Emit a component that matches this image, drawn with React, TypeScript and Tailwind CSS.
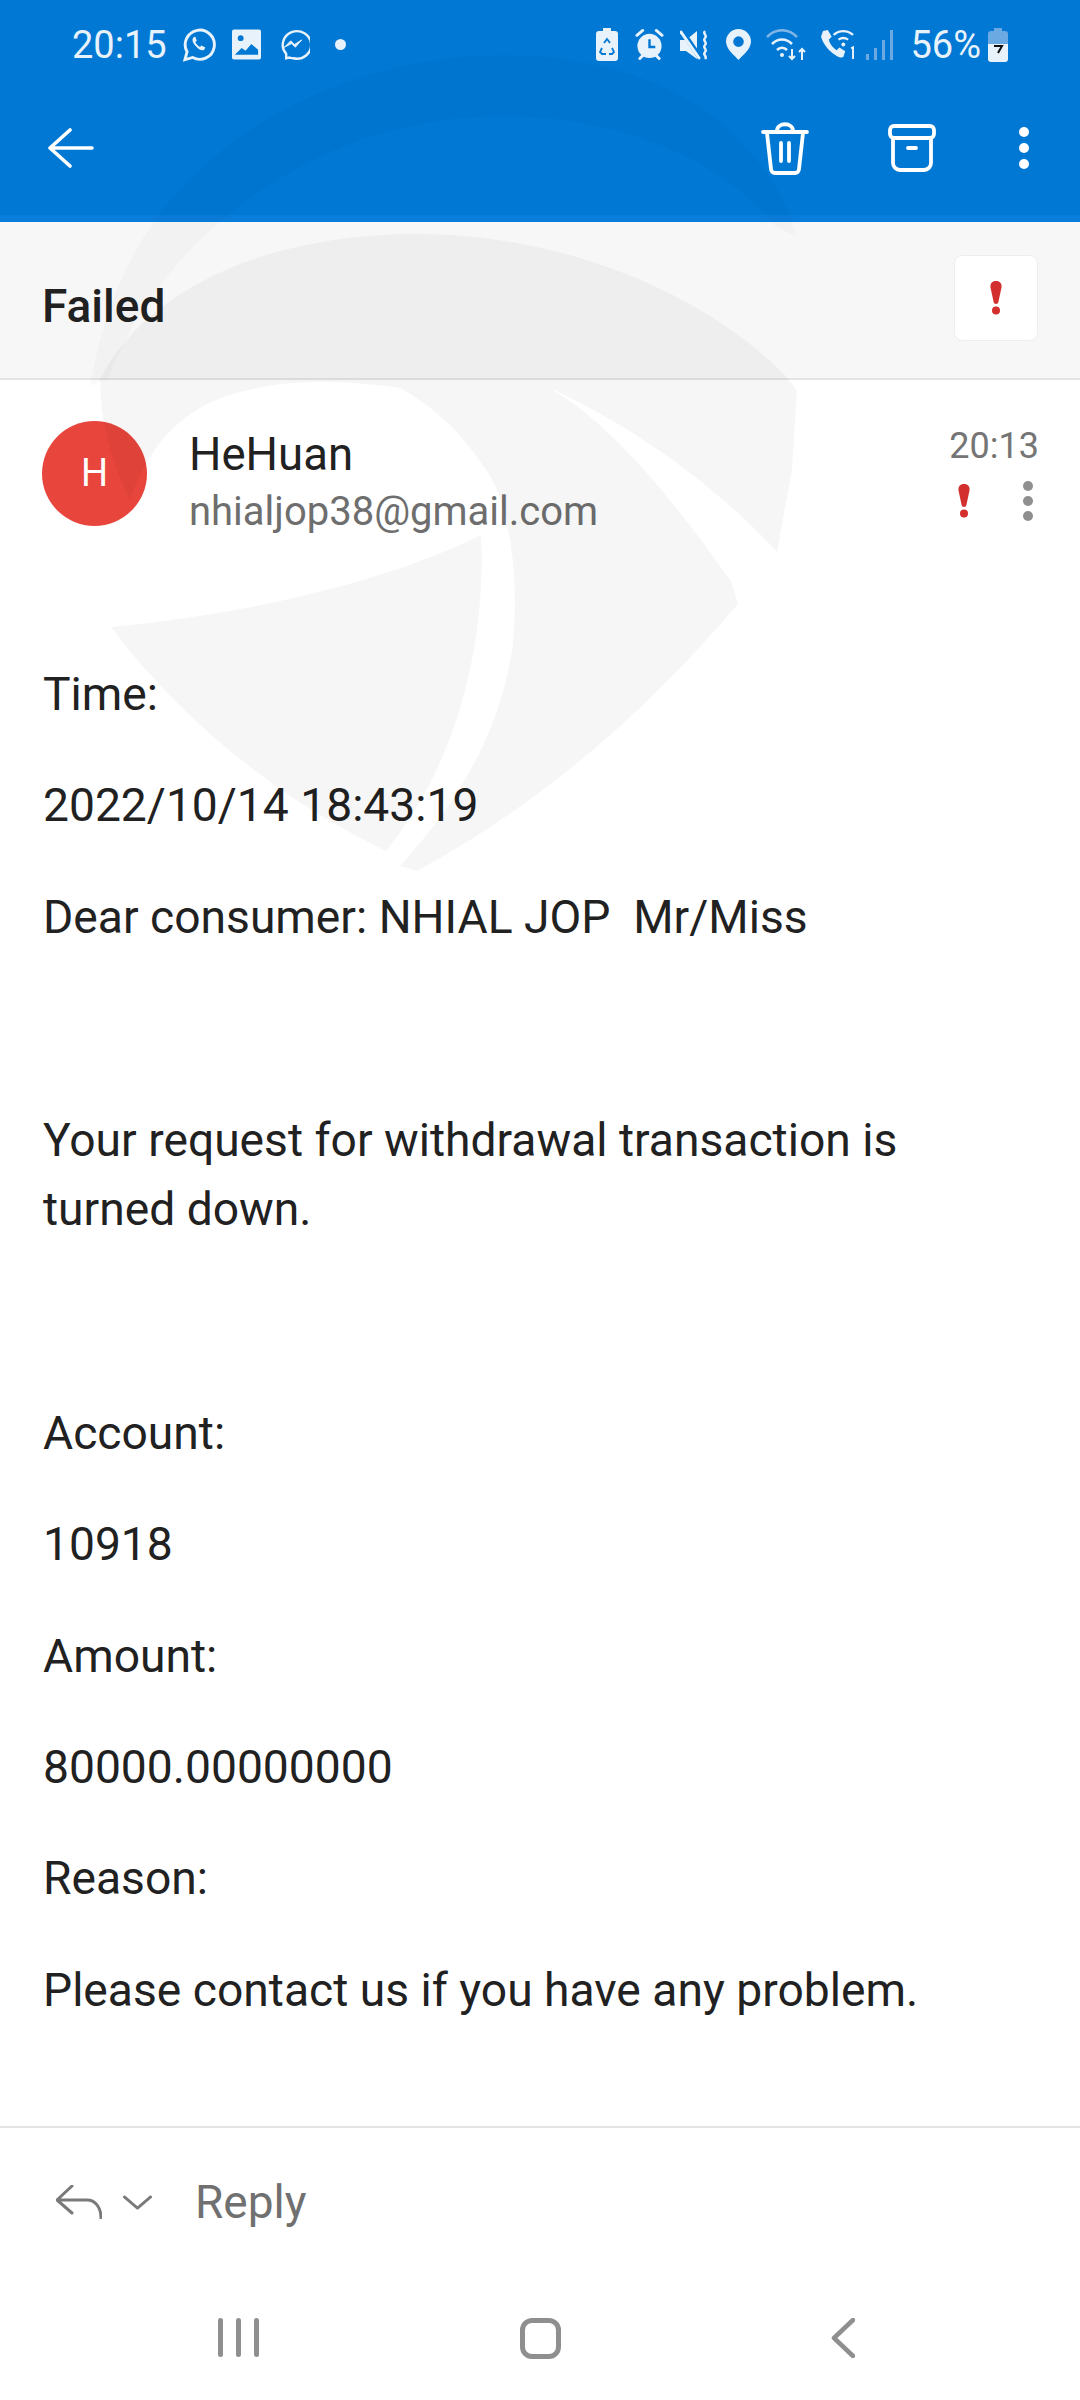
import React from 'react';

const font = { fontFamily: 'Roboto, sans-serif' };

const Bang = ({ className }: { className: string }) => (
  <svg viewBox="0 0 14 34" className={className} fill="#d32f2f">
    <path d="M7 0c4 0 6 2.500 5.500 6.500L9.500 20.500c-.4 1.800-1.300 2.500-2.500 2.500s-2.100-.7-2.500-2.500L1.500 6.500C1 2.500 3 0 7 0z" />
    <circle cx="7" cy="29.500" r="4" />
  </svg>
);

// faint logo that lies over the whole page
const Watermark = () => (
  <svg viewBox="0 0 1080 1000" className="absolute left-0 top-0 w-[1080px] h-[1000px] pointer-events-none">
    <path d="M90 386C110 270 160 190 250 130C400 30 620 30 730 130C765 165 785 195 797 237L775 226C700 130 520 85 360 140C240 185 150 270 108 379Z" fill="#000" fillOpacity="0.018" />
    <path d="M100 379C140 300 250 234 417 234C560 234 700 290 784 374L797 390L792 470L777 552C720 490 640 430 550 388L400 388C340 380 290 380 254 389C190 400 150 440 130 500C110 460 100 420 100 379Z" fill="#000" fillOpacity="0.035" />
    <path d="M400 388L550 388C620 430 680 510 731 581L738 604C640 720 530 810 417 871L400 866C460 800 500 730 512 650C522 570 505 490 483 466C460 430 430 405 400 388Z" fill="#000" fillOpacity="0.035" />
    <path d="M111 627C260 612 390 580 481 535C486 640 460 760 386 851C280 800 180 720 111 627Z" fill="#000" fillOpacity="0.035" />
  </svg>
);

const StatusBar = () => (
  <div className="flex items-center justify-between h-[89px] pl-[72px] pr-[72px] text-[#e8f2fb]">
    <div className="flex items-center">
      <span className="text-[38px] leading-none">20:15</span>
      <svg viewBox="0 0 36 36" className="w-[35px] h-[36px] ml-[15px]" fill="none" stroke="currentColor" strokeWidth="3">
        <path d="M3 33l2.200-8A15 15 0 1 1 11 30.800z" />
        <path d="M12 10c-2 2-1.500 5 2 9s7 5.500 9 3.500l1-2-4-2-1.500 1.500c-2-.8-4-3-4.800-5l1.500-1.500-1.500-4z" fill="currentColor" stroke="none" />
      </svg>
      <svg viewBox="0 0 30 31" className="w-[29px] h-[31px] ml-[15px]">
        <rect width="30" height="31" rx="2" fill="currentColor" />
        <circle cx="9" cy="9" r="3" fill="#0078d4" />
        <path d="M3 26l7-7 4 3 6-7 7 6v5H3z" fill="#0078d4" />
      </svg>
      <svg viewBox="0 0 36 36" className="w-[33px] h-[35px] ml-[16px]" fill="none" stroke="currentColor" strokeWidth="2.600">
        <path d="M10 33v-4.800A15.500 15 0 1 1 18 33c-1.500 0-3-.2-4.300-.7z" />
        <path d="M8 21l7-7 4 4 8-5-7 8-4-4z" fill="currentColor" strokeWidth="1" />
      </svg>
      <span className="w-[11px] h-[11px] rounded-full bg-current ml-[25px]" />
    </div>
    <div className="flex items-center">
      <svg viewBox="0 0 22 33" className="w-[22px] h-[33px]">
        <path d="M7 0h8v3h4a3 3 0 0 1 3 3v24a3 3 0 0 1-3 3H3a3 3 0 0 1-3-3V6a3 3 0 0 1 3-3h4z" fill="currentColor" />
        <path d="M8 15l3-4 3 4M6 20l-2 4 2 2h4M13 26h3l2-2-2-4" fill="none" stroke="#0078d4" strokeWidth="1.800" />
      </svg>
      <svg viewBox="0 0 30 33" className="w-[29px] h-[33px] ml-[17px]">
        <circle cx="15" cy="18" r="12.500" fill="currentColor" />
        <path d="M2 7l6-5M28 7l-6-5M5 31l3-3M25 31l-3-3" stroke="currentColor" strokeWidth="3" strokeLinecap="round" />
        <path d="M15 11v8h6" fill="none" stroke="#0078d4" strokeWidth="2.500" />
      </svg>
      <svg viewBox="0 0 30 32" className="w-[30px] h-[32px] ml-[16px]">
        <path d="M0 11h6l11-9v28l-11-8H0z" fill="currentColor" />
        <path d="M2 2l19 28" stroke="#0078d4" strokeWidth="5" />
        <path d="M1 3l18 26" stroke="currentColor" strokeWidth="3" strokeLinecap="round" />
        <path d="M25 2c-3 3 3 4 0 7s3 4 0 7 3 4 0 7 3 4 0 7" fill="none" stroke="currentColor" strokeWidth="2.400" />
      </svg>
      <svg viewBox="0 0 26 32" className="w-[25px] h-[31px] ml-[16px]">
        <path d="M13 0a13 13 0 0 1 13 13c0 8-9 15-13 19C9 28 0 21 0 13A13 13 0 0 1 13 0z" fill="currentColor" />
        <circle cx="13" cy="13" r="5.500" fill="#0078d4" />
      </svg>
      <svg viewBox="0 0 42 32" className="w-[42px] h-[32px] ml-[15px]" fill="none" stroke="currentColor" strokeWidth="2.600">
        <path d="M1 8c9-9 21-9 30 0" stroke="#7fb5e6" />
        <path d="M6 15c6-6 14-6 20 0M11 21c3-3 7-3 10 0" />
        <circle cx="16" cy="26" r="2" fill="currentColor" stroke="none" />
        <path d="M26 20v10M23 27l3 3 3-3M36 31V20M33 23l3-3 3 3" strokeWidth="2" />
      </svg>
      <svg viewBox="0 0 36 32" className="w-[35px] h-[31px] ml-[12px]">
        <path d="M3 2l5-1 4 7-3 3c1 4 4 8 8 11l3-3 6 4-2 6c-2 1-5 0-8-2C9 23 3 15 1 8z" fill="currentColor" />
        <path d="M14 6c6-5 14-5 20 0M19 11c3-2 7-2 10 0" fill="none" stroke="currentColor" strokeWidth="2.400" />
        <circle cx="24" cy="16" r="2" fill="currentColor" />
        <path d="M32 20l2-1v12" fill="none" stroke="currentColor" strokeWidth="2" />
      </svg>
      <svg viewBox="0 0 27 30" className="w-[27px] h-[30px] ml-[11px]" fill="#6aa9e2">
        <rect x="0" y="24" width="3" height="6" />
        <rect x="8" y="18" width="3" height="12" />
        <rect x="16" y="10" width="3" height="20" />
        <rect x="24" y="0" width="3" height="30" />
      </svg>
      <span className="text-[38px] leading-none ml-[17px]">56%</span>
      <svg viewBox="0 0 20 34" className="w-[20px] h-[34px] ml-[7px]">
        <path d="M6 0h8v3h3a3 3 0 0 1 3 3v10H0V6a3 3 0 0 1 3-3h3z" fill="#6aa9e2" />
        <path d="M0 16h20v15a3 3 0 0 1-3 3H3a3 3 0 0 1-3-3z" fill="currentColor" />
        <path d="M6 18h8l-4 7" fill="none" stroke="#111" strokeWidth="2" />
      </svg>
    </div>
  </div>
);

const Toolbar = () => (
  <div className="flex items-center justify-between h-[118px] pl-[48px] pr-[51px] text-white">
    <svg viewBox="0 0 46 40" className="w-[46px] h-[40px]" fill="none" stroke="currentColor" strokeWidth="3.600" strokeLinecap="round" strokeLinejoin="round">
      <path d="M44 20H3M22 2L2 20l20 18" />
    </svg>
    <div className="flex items-center">
      <svg viewBox="0 0 48 53" className="w-[48px] h-[53px]" fill="none" stroke="currentColor" strokeWidth="3.800" strokeLinecap="round" strokeLinejoin="round">
        <path d="M2 10h44M16 9c0-9 16-9 16 0M6 11l4 36a4 4 0 0 0 4 4h20a4 4 0 0 0 4-4l4-36M20 21v18M28 21v18" />
      </svg>
      <svg viewBox="0 0 48 48" className="w-[48px] h-[48px] ml-[79px]" fill="none" stroke="currentColor" strokeWidth="3.800" strokeLinecap="round" strokeLinejoin="round">
        <rect x="2" y="2" width="44" height="12" rx="4" />
        <path d="M5 14v25a7 7 0 0 0 7 7h24a7 7 0 0 0 7-7V14M20 24h8" />
      </svg>
      <div className="flex flex-col gap-[6px] ml-[83px]">
        <span className="w-[10px] h-[10px] rounded-full bg-white" />
        <span className="w-[10px] h-[10px] rounded-full bg-white" />
        <span className="w-[10px] h-[10px] rounded-full bg-white" />
      </div>
    </div>
  </div>
);

const lines: { text: string; gap: string }[] = [
  { text: 'Time:', gap: '' },
  { text: '2022/10/14 18:43:19', gap: 'mt-[51.4px]' },
  { text: 'Dear consumer: NHIAL JOP  Mr/Miss', gap: 'mt-[51.4px]' },
];

const lowerLines: { text: string; gap: string }[] = [
  { text: 'Account:', gap: 'mt-[159px]' },
  { text: '10918', gap: 'mt-[51.4px]' },
  { text: 'Amount:', gap: 'mt-[51.4px]' },
  { text: '80000.00000000', gap: 'mt-[51.4px]' },
  { text: 'Reason:', gap: 'mt-[51.4px]' },
  { text: 'Please contact us if you have any problem.', gap: 'mt-[51.4px]' },
];

export default function App() {
  return (
    <div className="relative w-[1080px] h-[2400px] bg-white overflow-hidden flex flex-col" style={font}>
      <div className="h-[222px] bg-[#0078d4] border-b-[7px] border-[#0a7ddb]">
        <StatusBar />
        <Toolbar />
      </div>
      <div className="h-[158px] bg-[#f7f7f7] border-b-2 border-[#e4e4e4] flex items-center justify-between pl-[42px] pr-[42px]">
        <span className="text-[46px] font-medium text-[#212121] mt-[13px]">Failed</span>
        <div className="w-[84px] h-[86px] rounded-[8px] bg-white border border-[#eeeeee] flex items-center justify-center mb-[4px]">
          <Bang className="w-[14px] h-[34px]" />
        </div>
      </div>
      <div className="flex pl-[42px] pr-[41px] pt-[41px]">
        <div className="w-[105px] h-[105px] rounded-full bg-[#e8453c] flex items-center justify-center text-white text-[38px]">H</div>
        <div className="ml-[42px] flex flex-col pt-[7px]">
          <span className="text-[45.5px] leading-[54px] text-[#212121]">HeHuan</span>
          <span className="text-[40px] leading-[50px] mt-[5px] text-[#6e6e6e]">nhialjop38@gmail.com</span>
        </div>
        <div className="ml-auto flex flex-col items-end">
          <span className="text-[36px] leading-[50px] text-[#757575]">20:13</span>
          <div className="flex items-center mt-[10px]">
            <Bang className="w-[14px] h-[34px]" />
            <div className="flex flex-col gap-[5px] ml-[52px] mr-[6px]">
              <span className="w-[10px] h-[10px] rounded-full bg-[#8f8f8f]" />
              <span className="w-[10px] h-[10px] rounded-full bg-[#8f8f8f]" />
              <span className="w-[10px] h-[10px] rounded-full bg-[#8f8f8f]" />
            </div>
          </div>
        </div>
      </div>
      <div className="flex-1 flex flex-col pl-[43px] pt-[127px] text-[46.2px] leading-[60px] text-[#212121] whitespace-pre">
        {lines.map((l) => <p key={l.text} className={l.gap}>{l.text}</p>)}
        <p className="mt-[159px] leading-[69px]">Your request for withdrawal transaction is</p>
        <p className="leading-[69px]">turned down.</p>
        {lowerLines.map((l) => <p key={l.text} className={l.gap}>{l.text}</p>)}
      </div>
      <div className="h-[150px] border-t-2 border-[#e4e4e4] flex items-center pl-[56px] text-[#7a7a7a]">
        <svg viewBox="0 0 46 34" className="w-[46px] h-[34px]" fill="none" stroke="currentColor" strokeWidth="3" strokeLinecap="round" strokeLinejoin="round">
          <path d="M16 1L1 15l15 13M1 15h30c8 0 14 7 14 18" />
        </svg>
        <svg viewBox="0 0 32 16" className="w-[31px] h-[15px] ml-[20px]" fill="none" stroke="currentColor" strokeWidth="3" strokeLinecap="round" strokeLinejoin="round">
          <path d="M2 2l14 12L30 2" />
        </svg>
        <span className="text-[46px] ml-[42px] text-[#707070]">Reply</span>
      </div>
      <div className="h-[124px] flex items-start pl-[218px] pt-[42px] text-[#8f8f8f]">
        <div className="flex gap-[13px]">
          <span className="w-[5px] h-[39px] bg-current rounded-full" />
          <span className="w-[5px] h-[39px] bg-current rounded-full" />
          <span className="w-[5px] h-[39px] bg-current rounded-full" />
        </div>
        <div className="w-[41px] h-[41px] rounded-[12px] border-[5px] border-current ml-[261px]" />
        <svg viewBox="0 0 24 40" className="w-[24px] h-[40px] ml-[270px]" fill="none" stroke="currentColor" strokeWidth="4.500" strokeLinecap="round" strokeLinejoin="round">
          <path d="M22 2L3 20l19 18" />
        </svg>
      </div>
      <Watermark />
    </div>
  );
}
